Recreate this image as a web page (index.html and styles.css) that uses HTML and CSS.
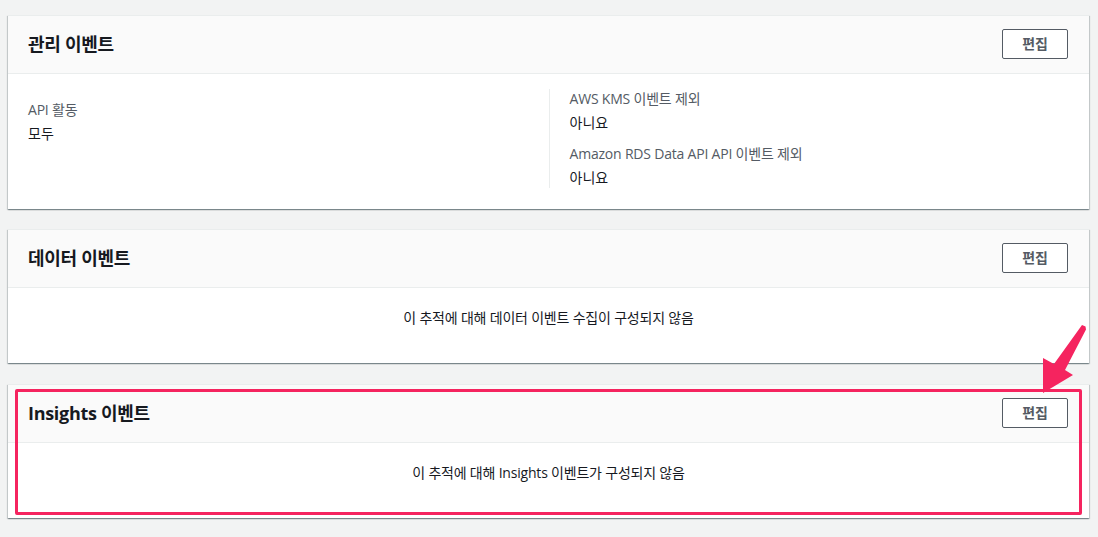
FILE: index.html
```html
<!DOCTYPE html>
<html lang="ko">
<head>
    <meta charset="UTF-8">
    <meta name="viewport" content="width=device-width, initial-scale=1.0">
    <title>추적 세부 정보</title>
    <link rel="stylesheet" href="styles.css">
</head>
<body>
    <div class="page">
        <div class="panel">
            <div class="panel-header">
                <h2 class="panel-title">관리 이벤트</h2>
                <button class="btn">편집</button>
            </div>
            <div class="panel-body columns">
                <div class="column column-first">
                    <div class="pair">
                        <div class="label">API 활동</div>
                        <div class="value">모두</div>
                    </div>
                </div>
                <div class="column column-split">
                    <div class="pair">
                        <div class="label">AWS KMS 이벤트 제외</div>
                        <div class="value">아니요</div>
                    </div>
                    <div class="pair">
                        <div class="label">Amazon RDS Data API API 이벤트 제외</div>
                        <div class="value">아니요</div>
                    </div>
                </div>
            </div>
        </div>

        <div class="panel">
            <div class="panel-header">
                <h2 class="panel-title">데이터 이벤트</h2>
                <button class="btn">편집</button>
            </div>
            <div class="panel-body empty">이 추적에 대해 데이터 이벤트 수집이 구성되지 않음</div>
        </div>

        <div class="panel panel-marked">
            <div class="panel-header">
                <h2 class="panel-title">Insights 이벤트</h2>
                <button class="btn">편집</button>
            </div>
            <div class="panel-body empty">이 추적에 대해 Insights 이벤트가 구성되지 않음</div>
            <div class="highlight"></div>
        </div>

        <!-- annotation arrow pointing at the Insights edit button -->
        <svg class="arrow" width="60" height="80" viewBox="0 0 60 80">
            <polygon points="52,5 55.5,6.5 56,9.5 35,50 43,55 13,73 13,38 24,44" fill="#f5245f"/>
        </svg>
    </div>
</body>
</html>
```

FILE: styles.css
```css
body {
    margin: 0;
    background-color: #f2f3f3;
    font-family: "Open Sans", "Noto Sans CJK KR", sans-serif;
    font-size: 14px;
    color: #16191f;
}

.page {
    position: relative;
    padding: 15px 9px 16px 8px;
}

.panel {
    position: relative;
    background-color: #fff;
    border-top: 1px solid #eaeded;
    box-shadow: 0 1px 1px 0 rgba(0,28,36,0.3), 1px 1px 1px 0 rgba(0,28,36,0.15), -1px 1px 1px 0 rgba(0,28,36,0.15);
    margin-bottom: 20px;
}

.panel-header {
    display: flex;
    align-items: center;
    justify-content: space-between;
    padding: 13px 21px 14px 20px;
    background-color: #fafafa;
    border-bottom: 1px solid #eaeded;
}

.panel-title {
    margin: 0;
    font-size: 18px;
    line-height: 22px;
    font-weight: 700;
    letter-spacing: -0.3px;
}

.btn {
    font-family: inherit;
    font-size: 14px;
    font-weight: 700;
    line-height: 20px;
    color: #545b64;
    background-color: #fff;
    border: 1px solid #545b64;
    border-radius: 2px;
    padding: 4px 19px;
}

.panel-body {
    padding: 15px 20px 21px;
}

.columns {
    display: grid;
    grid-template-columns: 1fr 1fr;
}

.column-first {
    padding-top: 11px;
}

.column-split {
    border-left: 1px solid #eaeded;
    padding-left: 20px;
}

.pair {
    margin-bottom: 11px;
}

.pair:last-child {
    margin-bottom: 0;
}

.label {
    color: #545b64;
    line-height: 20px;
    margin-bottom: 4px;
    letter-spacing: -0.2px;
}

.value {
    line-height: 20px;
}

.empty {
    text-align: center;
    line-height: 20px;
    padding: 20px 20px 35px;
    letter-spacing: -0.2px;
}

.panel-marked {
    margin-top: 21px;
}

.highlight {
    position: absolute;
    top: 4px;
    left: 7px;
    right: 7px;
    bottom: 3px;
    border: 3px solid #f5245f;
    border-radius: 2px;
}

.arrow {
    position: absolute;
    left: 1030px;
    top: 320px;
}
```
